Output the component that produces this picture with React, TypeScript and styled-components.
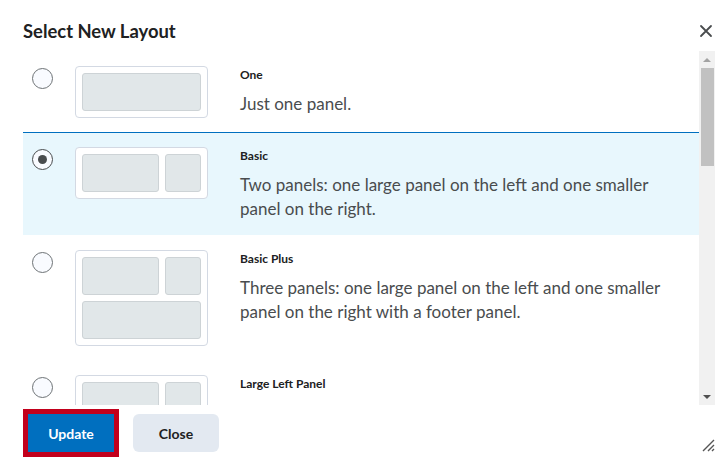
import * as React from 'react';
import styled, { createGlobalStyle } from 'styled-components';

const GlobalStyle = createGlobalStyle`
    html, body {
        margin: 0;
        padding: 0;
        background: #fff;
    }
    body {
        font-family: Lato, 'Liberation Sans', sans-serif;
        color: #202122;
    }
`;

const Dialog = styled.div`
    width: 723px;
    height: 468px;
    box-sizing: border-box;
    display: flex;
    flex-direction: column;
    padding: 0 8px 16px 23px;
    background: #fff;
`;

const Header = styled.div`
    display: flex;
    align-items: center;
    justify-content: space-between;
    height: 52px;
    padding-top: 10px;
    box-sizing: border-box;
`;

const Title = styled.h2`
    margin: 0;
    font-size: 18.4px;
    font-weight: 700;
    color: #202122;
`;

const CloseIcon = styled.button`
    border: 0;
    background: none;
    padding: 0;
    margin-right: 2px;
    width: 14px;
    height: 14px;
    display: flex;
    cursor: pointer;
`;

const Body = styled.div`
    flex: 1;
    min-height: 0;
    display: flex;
`;

const List = styled.div`
    flex: 1;
    overflow-y: scroll;
    scrollbar-width: none;
    &::-webkit-scrollbar {
        display: none;
    }
`;

const ScrollBar = styled.div`
    flex: none;
    width: 16px;
    margin-top: -1px;
    background: #f1f1f1;
    display: flex;
    flex-direction: column;
`;

const ScrollArrow = styled.div`
    flex: none;
    height: 16px;
    display: flex;
    align-items: center;
    justify-content: center;
`;

const Track = styled.div`
    flex: 1;
    position: relative;
`;

const ScrollThumb = styled.div`
    position: absolute;
    left: 2px;
    right: 1px;
    background: #c1c1c1;
`;

const Row = styled.label<{ selected?: boolean }>`
    display: flex;
    align-items: flex-start;
    padding: 14px 10px;
    border-top: 1px solid ${(p) => (p.selected ? '#006fbf' : 'transparent')};
    border-bottom: 1px solid ${(p) => (p.selected ? '#006fbf' : '#d3d9e3')};
    margin-top: -1px;
    background: ${(p) => (p.selected ? '#e8f7fd' : '#fff')};
    cursor: pointer;
`;

const Radio = styled.span<{ checked?: boolean }>`
    flex: none;
    width: 21px;
    height: 21px;
    box-sizing: border-box;
    margin-top: 2px;
    margin-left: -1px;
    border-radius: 50%;
    border: 1px solid ${(p) => (p.checked ? '#494c4e' : '#6e7376')};
    background: #f9fbff;
    display: flex;
    align-items: center;
    justify-content: center;
    &::after {
        content: '';
        width: 9px;
        height: 9px;
        border-radius: 50%;
        background: ${(p) => (p.checked ? '#494c4e' : 'transparent')};
    }
`;

const Thumb = styled.div`
    flex: none;
    width: 133px;
    box-sizing: border-box;
    margin-left: 22px;
    padding: 6px;
    border: 1px solid #d3d9e3;
    border-radius: 4px;
    background: #fff;
    display: grid;
    gap: 6px;
`;

const ThumbRow = styled.div<{ cols: string }>`
    display: grid;
    grid-template-columns: ${(p) => p.cols};
    gap: 6px;
`;

const Panel = styled.div`
    height: 38px;
    box-sizing: border-box;
    border: 1px solid #cdd3d6;
    border-radius: 3px;
    background: #e1e7e9;
`;

const Text = styled.div`
    margin-left: 32px;
    padding-right: 10px;
    flex: 1;
`;

const Name = styled.div`
    font-size: 12px;
    line-height: 18px;
    font-weight: 700;
    color: #202122;
`;

const Desc = styled.div`
    margin-top: 8px;
    font-size: 17px;
    line-height: 24px;
    color: #494c4e;
    max-width: 440px;
`;

const Footer = styled.div`
    display: flex;
    align-items: center;
    gap: 14px;
    padding-top: 9px;
`;

const Button = styled.button<{ primary?: boolean }>`
    height: 38px;
    min-width: 86px;
    padding: 0 20px;
    border-radius: ${(p) => (p.primary ? '0' : '6px')};
    border: 0;
    font-family: Lato, 'Liberation Sans', sans-serif;
    font-size: 14px;
    font-weight: 700;
    color: ${(p) => (p.primary ? '#fff' : '#202122')};
    background: ${(p) => (p.primary ? '#006fbf' : '#e3e9f1')};
    box-shadow: ${(p) => (p.primary ? '0 0 0 5px #c2001c' : 'none')};
    margin-left: ${(p) => (p.primary ? '5px' : '0')};
    margin-right: ${(p) => (p.primary ? '5px' : '0')};
    cursor: pointer;
`;

const Resize = styled.div`
    margin-left: auto;
    align-self: flex-end;
    width: 14px;
    height: 14px;
    display: flex;
`;

type Layout = { name: string; desc: string; rows: string[] };

const layouts: Layout[] = [
    { name: 'One', desc: 'Just one panel.', rows: ['1fr'] },
    {
        name: 'Basic',
        desc: 'Two panels: one large panel on the left and one smaller panel on the right.',
        rows: ['77fr 36fr'],
    },
    {
        name: 'Basic Plus',
        desc: 'Three panels: one large panel on the left and one smaller panel on the right with a footer panel.',
        rows: ['77fr 36fr', '1fr'],
    },
    {
        name: 'Large Left Panel',
        desc: 'Three panels: one large panel on the left and two smaller panels stacked on the right.',
        rows: ['77fr 36fr', '77fr 36fr'],
    },
    {
        name: 'Large Right Panel',
        desc: 'Three panels: two smaller panels stacked on the left and one large panel on the right.',
        rows: ['36fr 77fr', '36fr 77fr'],
    },
    { name: 'Two Equal Panels', desc: 'Two panels of equal width side by side.', rows: ['1fr 1fr'] },
    { name: 'Three Equal Panels', desc: 'Three panels of equal width side by side.', rows: ['1fr 1fr 1fr'] },
    {
        name: 'Header Plus Two',
        desc: 'Three panels: a header panel above two panels of equal width.',
        rows: ['1fr', '1fr 1fr'],
    },
    {
        name: 'Header Plus Three',
        desc: 'Four panels: a header panel above three panels of equal width.',
        rows: ['1fr', '1fr 1fr 1fr'],
    },
    {
        name: 'Header and Footer',
        desc: 'Four panels: a header panel, two panels of equal width and a footer panel.',
        rows: ['1fr', '1fr 1fr', '1fr'],
    },
];

export default function App() {
    const [selected, setSelected] = React.useState(1);
    const listRef = React.useRef<HTMLDivElement>(null);
    const [bar, setBar] = React.useState({ top: 0, size: 0.29 });

    const measure = React.useCallback(() => {
        const el = listRef.current;
        if (!el) return;
        const size = el.clientHeight / el.scrollHeight;
        setBar({ top: el.scrollTop / el.scrollHeight, size });
    }, []);

    React.useLayoutEffect(measure, [measure]);

    return (
        <>
            <GlobalStyle />
            <Dialog>
                <Header>
                    <Title>Select New Layout</Title>
                    <CloseIcon aria-label="Close">
                        <svg width="14" height="14" viewBox="0 0 14 14">
                            <path d="M2 2 L12 12 M12 2 L2 12" stroke="#494c4e" strokeWidth="1.8" strokeLinecap="round" />
                        </svg>
                    </CloseIcon>
                </Header>
                <Body>
                    <List ref={listRef} onScroll={measure}>
                        {layouts.map((l, i) => (
                            <Row key={l.name} selected={i === selected} onClick={() => setSelected(i)}>
                                <Radio checked={i === selected} />
                                <Thumb>
                                    {l.rows.map((cols, j) => (
                                        <ThumbRow key={j} cols={cols}>
                                            {cols.split(' ').map((_, k) => (
                                                <Panel key={k} />
                                            ))}
                                        </ThumbRow>
                                    ))}
                                </Thumb>
                                <Text>
                                    <Name>{l.name}</Name>
                                    <Desc>{l.desc}</Desc>
                                </Text>
                            </Row>
                        ))}
                    </List>
                    <ScrollBar>
                        <ScrollArrow>
                            <svg width="8" height="5" viewBox="0 0 8 5">
                                <path d="M0 5 L4 1 L8 5 Z" fill="#a3a3a3" />
                            </svg>
                        </ScrollArrow>
                        <Track>
                            <ScrollThumb
                                style={{
                                    top: `calc(${bar.top * 100}% + 1px)`,
                                    height: `calc(${bar.size * 100}% - 2px)`,
                                }}
                            />
                        </Track>
                        <ScrollArrow>
                            <svg width="8" height="5" viewBox="0 0 8 5">
                                <path d="M0 0 L4 4 L8 0 Z" fill="#505050" />
                            </svg>
                        </ScrollArrow>
                    </ScrollBar>
                </Body>
                <Footer>
                    <Button primary>Update</Button>
                    <Button>Close</Button>
                    <Resize>
                        <svg width="14" height="14" viewBox="0 0 14 14">
                            <path d="M13 2 L2 13 M13 7 L7 13 M13 11 L11 13" stroke="#555" strokeWidth="1.4" />
                        </svg>
                    </Resize>
                </Footer>
            </Dialog>
        </>
    );
}
